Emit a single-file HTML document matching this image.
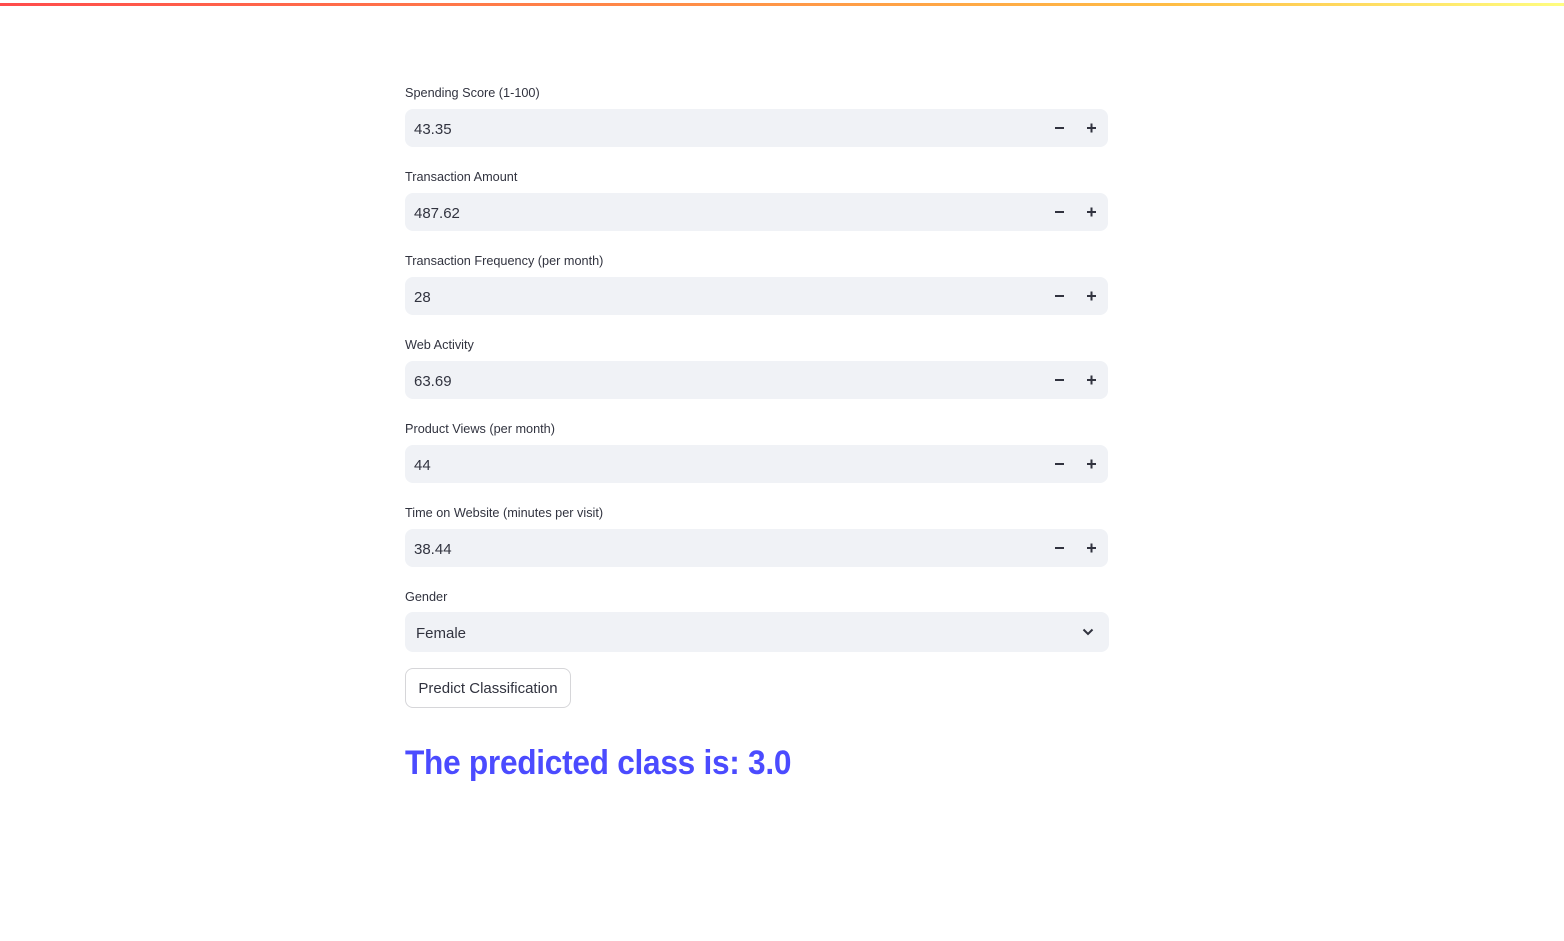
<!DOCTYPE html>
<html><head><meta charset="utf-8"><style>
*{margin:0;padding:0;box-sizing:border-box}
body{width:1564px;height:941px;background:#fff;font-family:"Liberation Sans",sans-serif;color:#31333f;position:relative;overflow:hidden}
.bar{position:absolute;left:0;top:3px;width:1564px;height:3px;background:linear-gradient(90deg,#ff4b4b,#ffbd45 75%,#fffd80)}
.lbl{position:absolute;left:405px;font-size:12.7px;color:#31333f}
.inp{position:absolute;left:405px;width:703px;height:38px;background:#f0f2f6;border-radius:8px}
.inp .v{position:absolute;left:9px;top:12px;font-size:15px}
.inp svg{position:absolute;top:14px}
.sel{position:absolute;left:405px;top:612px;width:704px;height:40px;background:#f0f2f6;border-radius:8px}
.sel .v{position:absolute;left:11px;top:13px;font-size:15px}
.btn{position:absolute;left:405px;top:668px;width:166px;height:40px;border:1px solid #d6d6d9;border-radius:8px;font-size:15px;line-height:40px;text-align:center;background:#fff}
h1{position:absolute;left:405px;top:744px;font-size:34px;font-weight:bold;color:#4b4bff;white-space:nowrap;transform-origin:0 0;transform:scaleX(0.93);letter-spacing:-0.3px}
</style></head><body>
<div class="bar"></div>

<div class="lbl" style="top:86px">Spending Score (1-100)</div>
<div class="inp" style="top:109px"><span class="v">43.35</span>
<svg style="left:650px" width="10" height="10"><rect x="0" y="4" width="9" height="2" fill="#31333f"/></svg>
<svg style="left:682px" width="10" height="10"><rect x="0" y="4" width="9" height="2" fill="#31333f"/><rect x="3.5" y="0.5" width="2" height="9" fill="#31333f"/></svg></div>

<div class="lbl" style="top:170px">Transaction Amount</div>
<div class="inp" style="top:193px"><span class="v">487.62</span>
<svg style="left:650px" width="10" height="10"><rect x="0" y="4" width="9" height="2" fill="#31333f"/></svg>
<svg style="left:682px" width="10" height="10"><rect x="0" y="4" width="9" height="2" fill="#31333f"/><rect x="3.5" y="0.5" width="2" height="9" fill="#31333f"/></svg></div>

<div class="lbl" style="top:254px">Transaction Frequency (per month)</div>
<div class="inp" style="top:277px"><span class="v">28</span>
<svg style="left:650px" width="10" height="10"><rect x="0" y="4" width="9" height="2" fill="#31333f"/></svg>
<svg style="left:682px" width="10" height="10"><rect x="0" y="4" width="9" height="2" fill="#31333f"/><rect x="3.5" y="0.5" width="2" height="9" fill="#31333f"/></svg></div>

<div class="lbl" style="top:338px">Web Activity</div>
<div class="inp" style="top:361px"><span class="v">63.69</span>
<svg style="left:650px" width="10" height="10"><rect x="0" y="4" width="9" height="2" fill="#31333f"/></svg>
<svg style="left:682px" width="10" height="10"><rect x="0" y="4" width="9" height="2" fill="#31333f"/><rect x="3.5" y="0.5" width="2" height="9" fill="#31333f"/></svg></div>

<div class="lbl" style="top:422px">Product Views (per month)</div>
<div class="inp" style="top:445px"><span class="v">44</span>
<svg style="left:650px" width="10" height="10"><rect x="0" y="4" width="9" height="2" fill="#31333f"/></svg>
<svg style="left:682px" width="10" height="10"><rect x="0" y="4" width="9" height="2" fill="#31333f"/><rect x="3.5" y="0.5" width="2" height="9" fill="#31333f"/></svg></div>

<div class="lbl" style="top:506px">Time on Website (minutes per visit)</div>
<div class="inp" style="top:529px"><span class="v">38.44</span>
<svg style="left:650px" width="10" height="10"><rect x="0" y="4" width="9" height="2" fill="#31333f"/></svg>
<svg style="left:682px" width="10" height="10"><rect x="0" y="4" width="9" height="2" fill="#31333f"/><rect x="3.5" y="0.5" width="2" height="9" fill="#31333f"/></svg></div>

<div class="lbl" style="top:590px">Gender</div>
<div class="sel"><span class="v">Female</span>
<svg style="position:absolute;left:677px;top:15px" width="12" height="10"><path d="M1.5 2.5 L6 7 L10.5 2.5" stroke="#31333f" stroke-width="2" fill="none"/></svg></div>

<div class="btn">Predict Classification</div>

<h1>The predicted class is: 3.0</h1>
</body></html>
